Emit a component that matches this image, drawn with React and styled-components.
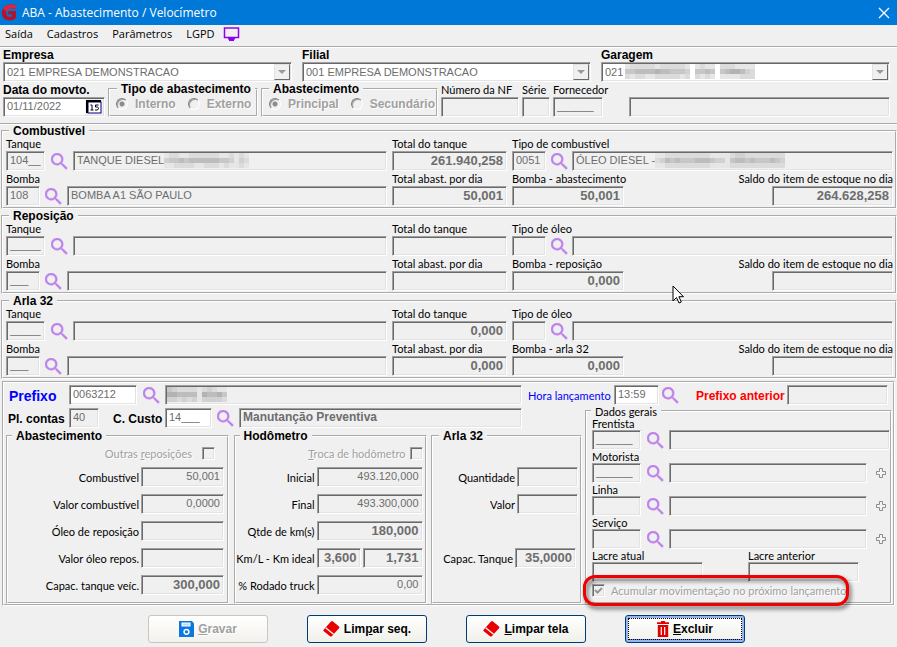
import React, { useId } from 'react'
import styled, { createGlobalStyle, css } from 'styled-components'

const GlobalStyle = createGlobalStyle`
    * {
        box-sizing: border-box;
    }

    body {
        margin: 0;
        background: #f0f0f0;
        color: #000;
        font-family: Lato, "Liberation Sans", sans-serif;
        font-size: 11px;
    }

    input, select, button {
        font-family: "Liberation Sans", Arial, sans-serif;
        font-size: 11px;
        margin: 0;
    }
`;

const boldText = css`
    font-family: "Liberation Sans", Arial, sans-serif;
    font-size: 12px;
    font-weight: 700;
`;

const Window = styled.main`
    position: relative;
    min-width: 880px;
    padding-bottom: 4px;
`;

const TitleBar = styled.header`
    height: 25px;
    padding: 0 7px 0 1px;
    display: flex;
    align-items: center;
    gap: 4px;
    background: #0078d7;
    color: #fff;
    font-family: "Open Sans", "Noto Sans", sans-serif;
`;

const WindowTitle = styled.h1`
    flex: 1;
    margin: 0;
    font-size: 12px;
    font-weight: 400;
`;

const CloseButton = styled.button`
    display: flex;
    padding: 0;
    border: none;
    background: none;
    color: #fff;
`;

const MenuBar = styled.nav`
    height: 21px;
    padding: 0 5px 3px;
    display: flex;
    align-items: center;
    gap: 14px;
`;

const MenuLink = styled.a`
    color: #000;
    font-family: "Open Sans", "Noto Sans", sans-serif;
    font-size: 11px;
    line-height: 16px;
    text-decoration: none;
`;

const MonitorLink = styled.a`
    display: flex;
    margin-left: -6px;
`;

const Header = styled.section`
    padding: 0 7px 6px 3px;
    border-top: 2px groove #fff;
    border-bottom: 2px groove #fff;
`;

const CompanyRow = styled.div`
    display: grid;
    grid-template-columns: 1fr 1fr 1fr;
    gap: 10px;
`;

const MovementRow = styled.div`
    margin-top: 1px;
    display: flex;
    align-items: flex-end;
    gap: 3px;
`;

const FieldBox = styled.div`
    position: relative;
    min-width: 0;
    display: flex;
    flex-direction: column;
    flex: ${p => p.$w ? `0 0 ${p.$w}px` : '1 1 0'};
    margin-left: ${p => p.$push || 0}px;
`;

const Label = styled.label`
    height: ${p => p.$short ? 13 : 14}px;
    line-height: ${p => p.$short ? 13 : 14}px;
    white-space: nowrap;
    color: ${p => p.$color || '#000'};

    ${p => p.$bold && boldText}
    ${p => p.$big && 'font-size: 14px;'}
`;

const sunken = css`
    border: 1px solid;
    border-color: #a0a0a0 #fff #fff #a0a0a0;
    box-shadow: inset 1px 1px #696969, inset -1px -1px #e3e3e3;
`;

const Input = styled.input`
    ${sunken}
    width: 100%;
    min-width: 0;
    height: 20px;
    padding: 0 3px 2px;
    border-radius: 0;
    outline: none;
    background: ${p => p.$white ? '#fff' : '#f0f0f0'};
    color: #6d6d6d;
    text-align: ${p => p.$right ? 'right' : 'left'};

    ${p => p.$bold && boldText}
    ${p => p.$bold && p.$right && 'font-size: 13px;'}
`;

const Select = styled.select`
    ${sunken}
    width: 100%;
    height: 20px;
    padding: 0 20px 1px 3px;
    border-radius: 0;
    appearance: none;
    background: #fff;
    color: #6d6d6d;
    opacity: 1;
`;

const DropArrow = styled.span`
    position: absolute;
    right: 2px;
    bottom: 2px;
    width: 16px;
    height: 16px;
    display: flex;
    align-items: center;
    justify-content: center;
    border: 1px solid;
    border-color: #e3e3e3 #696969 #696969 #e3e3e3;
    background: #f0f0f0;
    pointer-events: none;
`;

const CalendarButton = styled.button`
    position: absolute;
    right: 2px;
    bottom: 2px;
    width: 18px;
    height: 16px;
    padding: 0;
    display: flex;
    align-items: center;
    justify-content: center;
    border: none;
    background: #f0f0f0;
`;

const Mosaic = styled.svg`
    position: absolute;
    left: ${p => p.$left}px;
    bottom: 3px;
`;

const Group = styled.fieldset`
    min-width: 0;
    margin: 0;
    padding: ${p => p.$pad || '0'};
    border: 2px groove #fff;
`;

const Legend = styled.legend`
    height: 12px;
    margin-left: ${p => p.$indent || 4}px;
    padding: 0 4px;
    line-height: 13px;
    white-space: nowrap;

    ${p => !p.$plain && boldText}
`;

const RadioGroup = styled(Group)`
    flex: 0 0 ${p => p.$w}px;
    height: 34px;
`;

const RadioRow = styled.div`
    height: 18px;
    padding: 0 0 0 6px;
    display: flex;
    align-items: center;
    gap: 12px;
`;

const Choice = styled.label`
    display: flex;
    align-items: center;
    gap: ${p => p.$gap || 7}px;
    height: 14px;
    white-space: nowrap;
    color: #a0a0a0;
    text-shadow: 1px 1px #fff;

    ${p => p.$bold && boldText}
`;

const Radio = styled.input`
    width: 12px;
    height: 12px;
    appearance: none;
    border: 1px solid;
    border-color: #808080 #fff #fff #808080;
    border-radius: 50%;
    background: #f0f0f0;
    box-shadow: inset 1px 1px #a0a0a0;

    &:checked {
        background: radial-gradient(circle, #8c8c8c 2px, #f0f0f0 3px);
    }
`;

const CheckBox = styled.input`
    ${sunken}
    width: 13px;
    height: 13px;
    flex: none;
    appearance: none;
    background: #f0f0f0;

    &:checked {
        background: url("data:image/svg+xml,%3Csvg xmlns='http://www.w3.org/2000/svg' viewBox='0 0 11 11'%3E%3Cpath d='M2 5l2.5 2.500L9 3' fill='none' stroke='%23969696' stroke-width='2'/%3E%3C/svg%3E");
    }
`;

const Stock = styled.div`
    display: grid;
    grid-template-columns: 1fr 115px 1fr;
    column-gap: 5px;
    row-gap: 1px;
`;

const StockGroups = styled.section`
    display: flex;
    flex-direction: column;
    gap: 1px;
    padding-left: 1px;
`;

const Line = styled.div`
    min-width: 0;
    display: flex;
    align-items: ${p => p.$center ? 'center' : 'flex-end'};
    justify-content: ${p => p.$spread ? 'space-between' : 'flex-start'};
`;

const LookupButton = styled.button`
    flex: none;
    width: ${p => p.$w || 28}px;
    height: 20px;
    padding: 0;
    display: flex;
    align-items: center;
    justify-content: center;
    border: none;
    background: none;
    color: #bd80ec;
`;

const BalanceBox = styled.div`
    display: flex;
    flex-direction: column;
    align-items: flex-end;

    input {
        width: 121px;
    }
`;

const Entry = styled.section`
    margin: 2px 2px 0;
    padding: 2px 0 0 2px;
    border: 2px groove #fff;
`;

const EntryBody = styled.div`
    display: grid;
    grid-template-columns: 576px 1fr;
    gap: 3px;
`;

const AccountLine = styled(Line)`
    margin: 3px 0 2px;
`;

const Caption = styled(Label)`
    flex: 0 0 ${p => p.$w}px;
    padding-left: ${p => p.$pad || 0}px;
    height: 18px;
    line-height: 20px;
`;

const Totals = styled.div`
    display: grid;
    grid-template-columns: 223px 193px 151px;
    justify-content: space-between;
`;

const Stack = styled.div`
    padding: 4px ${p => p.$right || 2}px 7px 0;
    display: flex;
    flex-direction: column;
    gap: 7px;
`;

const CheckLine = styled.div`
    height: 14px;
    padding-right: ${p => p.$inset || 0}px;
    display: flex;
    justify-content: flex-end;
`;

const AmountLine = styled.div`
    height: 20px;
    display: flex;
    align-items: center;
    justify-content: flex-end;
    gap: 2px;
    padding-right: ${p => p.$inset || 0}px;

    label {
        padding-top: 2px;
        height: 16px;
    }
`;

const AmountBox = styled.div`
    flex: 0 0 ${p => p.$w}px;
`;

const People = styled(Group)`
    margin-right: 1px;
`;

const PeopleBody = styled.div`
    padding-left: 5px;
`;

const PlusButton = styled.button`
    flex: 0 0 23px;
    height: 20px;
    padding: 0 0 0 5px;
    display: flex;
    align-items: center;
    justify-content: center;
    border: none;
    background: none;
`;

const SealLine = styled(Line)`
    padding-right: 31px;
`;

const Highlight = styled.div`
    position: relative;
    width: 247px;
    margin-top: 1px;

    &::after {
        content: "";
        position: absolute;
        inset: -8px -10px -9px -9px;
        border: 3px solid #f00000;
        border-radius: 12px;
        filter: drop-shadow(2px 3px 2px rgba(0, 0, 0, .6));
        pointer-events: none;
    }
`;

const Actions = styled.footer`
    padding: 9px 4px 0 0;
    display: flex;
    justify-content: center;
    gap: 39px;
`;

const ActionButton = styled.button`
    ${boldText}
    width: 120px;
    height: 28px;
    padding: 0;
    display: flex;
    align-items: center;
    justify-content: center;
    gap: 4px;
    border: 1px solid #003c74;
    border-radius: 3px;
    outline: ${p => p.$focus ? '1px dotted #000' : 'none'};
    outline-offset: -4px;
    box-shadow: ${p => p.$focus ? 'inset 0 0 0 2px #98b4ee, inset 0 -3px #6982ee' : 'none'};
    background: linear-gradient(#fff, #f0f0ea);
    color: #000;

    &:disabled {
        border-color: #c9c7ba;
        background: linear-gradient(#fff, #f3f1ed);
        color: #a0a0a0;
        text-shadow: 1px 1px #fff;
    }
`;

const Pointer = styled.svg`
    position: absolute;
    left: 672px;
    top: 285px;
    pointer-events: none;
`;

const LogoIcon = () => (
    <svg width="17" height="17" viewBox="0 0 17 17">
        <path d="M15.500 1.500C11-.3 5 0 2 4.500c-2.500 4-1.200 9 2.500 11 3.500 1.800 8.500 1 10.500-1.500V7H7.500l-1 3.500h4.300v2c-2.300.8-5 .3-5.500-2.500-.6-3.500 2-5.700 5.500-5.500l3.500.3z" fill="#b3132b" />
        <path d="M15.500 1.500C11-.3 5 0 2 4.500L5.500 8c.5-2.500 2.500-3.700 5.300-3.500l3.500.3z" fill="#e0243c" />
    </svg>
)

const CloseIcon = () => (
    <svg width="12" height="12" viewBox="0 0 12 12">
        <path d="M1 1l10 10M11 1L1 11" stroke="currentColor" strokeWidth="1.300" />
    </svg>
)

const MonitorIcon = () => (
    <svg width="17" height="14" viewBox="0 0 17 14">
        <path d="M1.500 1h14v9.500h-14z" fill="none" stroke="#9000f0" strokeWidth="1.500" />
        <path d="M5 11h7v1.500h-1V14H6v-1.500H5z" fill="#9000f0" />
    </svg>
)

const SearchIcon = () => (
    <svg width="17" height="17" viewBox="3 3 18 18">
        <path fill="currentColor" stroke="currentColor" strokeWidth=".4" d="M15.500 14h-.79l-.28-.27A6.471 6.471 0 0 0 16 9.500 6.500 6.500 0 1 0 9.500 16c1.610 0 3.090-.59 4.230-1.570l.27.28v.79l5 4.990L20.490 19l-4.990-5zm-6 0C7.010 14 5 11.990 5 9.500S7.010 5 9.500 5 14 7.010 14 9.500 11.990 14 9.500 14z" />
    </svg>
)

const CalendarIcon = () => (
    <svg width="16" height="14" viewBox="0 0 16 14">
        <rect x="2" y="2" width="13" height="11" fill="#fff" stroke="#000080" strokeWidth="1" />
        <path d="M1 13V1h14" fill="none" stroke="#000" strokeWidth="2" />
        <path d="M4.500 5h1.500v5M4.500 10h3M12.500 5H9.500v2h2q1 .3 1 1.500T11 10H9" fill="none" stroke="#000" />
    </svg>
)

const PlusIcon = () => (
    <svg width="10" height="10" viewBox="0 0 10 10">
        <path d="M3.500.5h3v3h3v3h-3v3h-3v-3h-3v-3h3z" fill="#f4f4f4" stroke="#8c8c8c" />
    </svg>
)

const SaveIcon = () => (
    <svg width="15" height="16" viewBox="0 0 15 16">
        <path d="M0 0h13l2 2.500V16H0z" fill="#0a78e0" />
        <path d="M2.500 1.500h9v4h-9z" fill="#fff" />
        <path d="M4 2.500h6.500v2H4z" fill="#b9daf8" />
        <circle cx="7.500" cy="10.800" r="2.400" fill="#0a78e0" stroke="#fff" strokeWidth="1.500" />
    </svg>
)

const EraserIcon = () => (
    <svg width="17" height="16" viewBox="0 0 17 16">
        <path d="M8 .5q1-.8 2 0l6 5q.8.8 0 1.700L9 15q-1 .9-2 .2L.8 10.200q-.9-.9 0-1.700z" fill="#e80000" />
        <path d="M2.600 6.800l8 6.500" fill="none" stroke="#fff" strokeWidth="1.200" />
    </svg>
)

const TrashIcon = () => (
    <svg width="12" height="16" viewBox="0 0 12 16">
        <path d="M4 0h4v1.200h4V3H0V1.200h4zM.8 4h10.400v12H.8z" fill="#e00000" />
        <path d="M4.300 6v8M7.700 6v8" stroke="#fff" strokeWidth="1.200" />
    </svg>
)

// each digit is one cell, a higher digit is a darker grey
const HiddenText = ({ left, rows }) => (
    <Mosaic $left={left} width={rows[0].length * 5} height="15" aria-hidden="true">
        {rows.map((row, y) => row.split('').map((n, x) => n !== ' ' && (
            <rect key={`${x}-${y}`} x={x * 5} y={y * 5} width="5" height="5" fill={`hsl(0 0% ${94 - n * 4}%)`} />
        )))}
    </Mosaic>
)

const Field = ({ label, w, push, short, boldLabel, name, value = '', children, ...rest }) => {
    const id = useId()
    return (
        <FieldBox $w={w} $push={push}>
            {label && <Label htmlFor={id} $bold={boldLabel} $short={short}>{label}</Label>}
            <Input id={id} aria-label={label ? undefined : name} defaultValue={value} readOnly {...rest} />
            {children}
        </FieldBox>
    )
}

const Combo = ({ label, value, children }) => {
    const id = useId()
    return (
        <FieldBox>
            <Label htmlFor={id} $bold>{label}</Label>
            <Select id={id} disabled>
                <option>{value}</option>
            </Select>
            {children}
            <DropArrow>
                <svg width="8" height="4" viewBox="0 0 8 4"><path d="M0 0h8L4 4z" fill="#999" /></svg>
            </DropArrow>
        </FieldBox>
    )
}

const Lookup = ({ w, name }) => (
    <LookupButton type="button" $w={w} aria-label={`Pesquisar ${name}`}>
        <SearchIcon />
    </LookupButton>
)

const StockGroup = ({ title, tank = '_____', tankName, tankHidden, tankTotal, pump = '___', pumpName, dayTotal, typeLabel, type, typeName, typeHidden, pumpLabel, pumpTotal, balance }) => {
    const id = useId()
    return (
        <Group $pad="0 2px 1px 3px">
            <Legend $indent={3}>{title}</Legend>
            <Stock>
                <Line>
                    <Field label="Tanque" w={39} value={tank} />
                    <Lookup name="tanque" />
                    <Field name="Nome do tanque" value={tankName}>{tankHidden}</Field>
                </Line>
                <Field label="Total do tanque" value={tankTotal} $right $bold />
                <Line>
                    <Field label={typeLabel} w={34} value={type} />
                    <Lookup name="tipo" w={26} />
                    <Field name="Nome do tipo" value={typeName}>{typeHidden}</Field>
                </Line>
                <Line>
                    <Field label="Bomba" w={34} value={pump} />
                    <Lookup name="bomba" w={27} />
                    <Field name="Nome da bomba" value={pumpName} />
                </Line>
                <Field label="Total abast. por dia" value={dayTotal} $right $bold />
                <Line $spread>
                    <Field label={pumpLabel} w={112} value={pumpTotal} $right $bold />
                    <BalanceBox>
                        <Label htmlFor={id}>Saldo do item de estoque no dia</Label>
                        <Input id={id} defaultValue={balance} readOnly $right $bold />
                    </BalanceBox>
                </Line>
            </Stock>
        </Group>
    )
}

const Amount = ({ label, w, value = '', bold, inset, extra }) => {
    const id = useId()
    return (
        <AmountLine $inset={inset}>
            <Label htmlFor={id}>{label}</Label>
            {extra && <AmountBox $w={44}><Input id={id} defaultValue={extra} readOnly $right $bold /></AmountBox>}
            <AmountBox $w={w}>
                <Input id={extra ? undefined : id} aria-label={extra ? 'Km ideal' : undefined} defaultValue={value} readOnly $right $bold={bold} />
            </AmountBox>
        </AmountLine>
    )
}

const Person = ({ label, value, plus }) => (
    <Line>
        <Field label={label} w={49} value={value} short />
        <Lookup name={label} />
        <Field name={`Nome ${label}`} />
        {plus && <PlusButton type="button" aria-label={`Adicionar ${label}`}><PlusIcon /></PlusButton>}
    </Line>
)

const App = () => {
    return (
        <>
            <GlobalStyle />
            <Window>
                <TitleBar>
                    <LogoIcon />
                    <WindowTitle>ABA - Abastecimento / Velocímetro</WindowTitle>
                    <CloseButton type="button" aria-label="Fechar"><CloseIcon /></CloseButton>
                </TitleBar>
                <MenuBar>
                    <MenuLink href="#saida">Saída</MenuLink>
                    <MenuLink href="#cadastros">Cadastros</MenuLink>
                    <MenuLink href="#parametros">Parâmetros</MenuLink>
                    <MenuLink href="#lgpd">LGPD</MenuLink>
                    <MonitorLink href="#monitor" aria-label="Monitor"><MonitorIcon /></MonitorLink>
                </MenuBar>

                <Header>
                    <CompanyRow>
                        <Combo label="Empresa" value="021 EMPRESA DEMONSTRACAO" />
                        <Combo label="Filial" value="001 EMPRESA DEMONSTRACAO" />
                        <Combo label="Garagem" value="021">
                            <HiddenText left={24} rows={['1222221222221 1211 2221111', '4455556554443 4454 4566532', '2122112222212 2121 1111222']} />
                        </Combo>
                    </CompanyRow>
                    <MovementRow>
                        <Field label="Data do movto." w={102} value="01/11/2022" boldLabel $white>
                            <CalendarButton type="button" aria-label="Calendário"><CalendarIcon /></CalendarButton>
                        </Field>
                        <RadioGroup $w={150}>
                            <Legend $indent={7}>Tipo de abastecimento</Legend>
                            <RadioRow>
                                <Choice $bold><Radio type="radio" name="tipo" defaultChecked disabled />Interno</Choice>
                                <Choice $bold><Radio type="radio" name="tipo" disabled />Externo</Choice>
                            </RadioRow>
                        </RadioGroup>
                        <RadioGroup $w={177}>
                            <Legend $indent={6}>Abastecimento</Legend>
                            <RadioRow>
                                <Choice $bold><Radio type="radio" name="abast" defaultChecked disabled />Principal</Choice>
                                <Choice $bold><Radio type="radio" name="abast" disabled />Secundário</Choice>
                            </RadioRow>
                        </RadioGroup>
                        <Field label="Número da NF" w={78} />
                        <Field label="Série" w={28} />
                        <Field label="Fornecedor" w={50} value="______" />
                        <Field name="Nome do fornecedor" push={23} />
                    </MovementRow>
                </Header>

                <StockGroups>
                    <StockGroup
                        title="Combustível"
                        tank="104__"
                        tankName="TANQUE DIESEL"
                        tankHidden={<HiddenText left={91} rows={['12211222222112121', '34454555555443132', '11222211222121121']} />}
                        tankTotal="261.940,258"
                        pump="108"
                        pumpName="BOMBA A1 SÃO PAULO"
                        dayTotal="50,001"
                        typeLabel="Tipo de combustível"
                        type="0051"
                        typeName="ÓLEO DIESEL -"
                        typeHidden={<HiddenText left={83} rows={['11222222222111123322222222', '23545444555433145545444543', '11222222222111122222222222']} />}
                        pumpLabel="Bomba - abastecimento"
                        pumpTotal="50,001"
                        balance="264.628,258"
                    />
                    <StockGroup title="Reposição" typeLabel="Tipo de óleo" pumpLabel="Bomba - reposição" pumpTotal="0,000" />
                    <StockGroup title="Arla 32" tankTotal="0,000" dayTotal="0,000" typeLabel="Tipo de óleo" pumpLabel="Bomba - arla 32" pumpTotal="0,000" />
                </StockGroups>

                <Entry>
                    <Line $center>
                        <Caption htmlFor="prefixo" $w={63} $pad={3} $bold $big $color="#0000ff">Prefixo</Caption>
                        <FieldBox $w={68}><Input id="prefixo" defaultValue="0063212" $white /></FieldBox>
                        <Lookup name="prefixo" />
                        <Field name="Placa">
                            <HiddenText left={2} rows={['432222123211', '665555165564', '332323133332']} />
                        </Field>
                        <Caption htmlFor="hora" $w={92} $pad={6} $color="#0000ff">Hora lançamento</Caption>
                        <FieldBox $w={45}><Input id="hora" defaultValue="13:59" $white /></FieldBox>
                        <Lookup name="hora" w={22} />
                        <Caption htmlFor="anterior" $w={106} $pad={15} $bold $color="#ff0000">Prefixo anterior</Caption>
                        <FieldBox $w={101}><Input id="anterior" readOnly /></FieldBox>
                        <FieldBox $w={5} />
                    </Line>
                    <EntryBody>
                        <div>
                            <AccountLine $center>
                                <Caption htmlFor="contas" $w={63} $pad={2} $bold>Pl. contas</Caption>
                                <FieldBox $w={30}><Input id="contas" defaultValue="40" readOnly /></FieldBox>
                                <Caption htmlFor="custo" $w={66} $pad={14} $bold>C. Custo</Caption>
                                <FieldBox $w={47}><Input id="custo" defaultValue="14___" $white /></FieldBox>
                                <Lookup name="custo" w={27} />
                                <Field name="Centro de custo" w={283} value="Manutanção Preventiva" $bold />
                            </AccountLine>
                            <Totals>
                                <Group>
                                    <Legend>Abastecimento</Legend>
                                    <Stack $right={3}>
                                        <CheckLine $inset={9}>
                                            <Choice htmlFor="outras" $gap={10}><span>Outras <u>r</u>eposições</span><CheckBox id="outras" type="checkbox" disabled /></Choice>
                                        </CheckLine>
                                        <Amount label="Combustível" w={83} value="50,001" />
                                        <Amount label="Valor combustível" w={83} value="0,0000" />
                                        <Amount label="Óleo de reposição" w={83} />
                                        <Amount label="Valor óleo repos." w={83} />
                                        <Amount label="Capac. tanque veíc." w={83} value="300,000" bold />
                                    </Stack>
                                </Group>
                                <Group>
                                    <Legend>Hodômetro</Legend>
                                    <Stack>
                                        <CheckLine>
                                            <Choice htmlFor="troca" $gap={4}><span><u>T</u>roca de hodômetro</span><CheckBox id="troca" type="checkbox" disabled /></Choice>
                                        </CheckLine>
                                        <Amount label="Inicial" w={106} value="493.120,000" />
                                        <Amount label="Final" w={106} value="493.300,000" />
                                        <Amount label="Qtde de km(s)" w={106} value="180,000" bold />
                                        <Amount label="Km/L - Km ideal" w={60} extra="3,600" value="1,731" bold />
                                        <Amount label="% Rodado truck" w={106} value="0,00" />
                                    </Stack>
                                </Group>
                                <Group>
                                    <Legend $indent={6}>Arla 32</Legend>
                                    <Stack>
                                        <CheckLine />
                                        <Amount label="Quantidade" w={61} />
                                        <Amount label="Valor" w={61} />
                                        <AmountLine />
                                        <Amount label="Capac. Tanque" w={61} value="35,0000" bold inset={2} />
                                    </Stack>
                                </Group>
                            </Totals>
                        </div>
                        <People>
                            <Legend $plain>Dados gerais</Legend>
                            <PeopleBody>
                                <Person label="Frentista" value="______" />
                                <Person label="Motorista" value="______" plus />
                                <Person label="Linha" plus />
                                <Person label="Serviço" plus />
                                <SealLine $spread>
                                    <Field label="Lacre atual" w={111} short />
                                    <Field label="Lacre anterior" w={111} short />
                                </SealLine>
                                <Highlight>
                                    <Choice $gap={6}><CheckBox type="checkbox" defaultChecked disabled />Acumular movimentação no próximo lançamento</Choice>
                                </Highlight>
                            </PeopleBody>
                        </People>
                    </EntryBody>
                </Entry>

                <Actions>
                    <ActionButton type="button" disabled><SaveIcon /><span><u>G</u>ravar</span></ActionButton>
                    <ActionButton type="button"><EraserIcon /><span>Lim<u>p</u>ar seq.</span></ActionButton>
                    <ActionButton type="button"><EraserIcon /><span><u>L</u>impar tela</span></ActionButton>
                    <ActionButton type="button" $focus><TrashIcon /><span><u>E</u>xcluir</span></ActionButton>
                </Actions>

                <Pointer width="12" height="20" viewBox="0 0 12 20" aria-hidden="true">
                    <path d="M1 1v15l3.500-3.500L7 18l2.300-1-2.400-5.300h4.600z" fill="#fff" stroke="#000" />
                </Pointer>
            </Window>
        </>
    )
}

export default App
